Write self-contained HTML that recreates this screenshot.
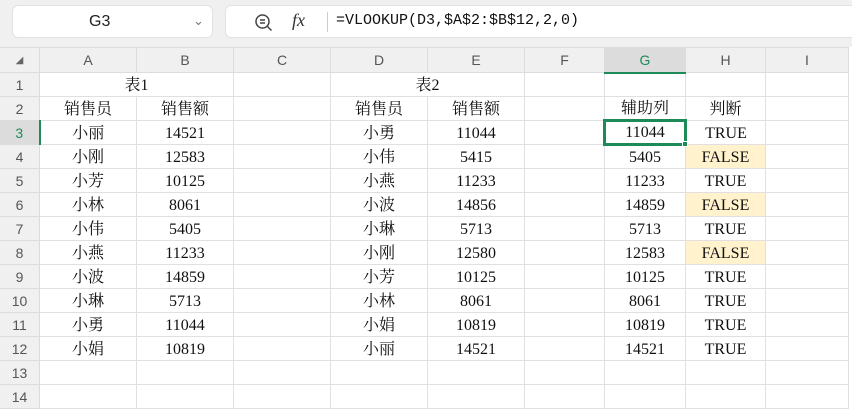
<!DOCTYPE html>
<html><head><meta charset="utf-8"><style>
*{margin:0;padding:0;box-sizing:border-box}
body{width:852px;height:406px;overflow:hidden;background:#fff;position:relative;font-family:"Liberation Serif","Noto Serif CJK SC",serif}
.top{position:absolute;left:0;top:0;width:852px;height:47px;background:#f0f0f0}
.nb{position:absolute;left:12px;top:5px;width:201px;height:33px;background:#fff;border-radius:6px;border:1px solid #e2e2e2;font:16px "Liberation Sans",sans-serif;color:#222;line-height:31px;padding-left:76px}
.fb{position:absolute;left:225px;top:5px;width:640px;height:33px;background:#fff;border-radius:6px;border:1px solid #e2e2e2}
table{position:absolute;left:-1px;top:47px;border-collapse:collapse;table-layout:fixed}
td{border:1px solid #e0e0e0;height:24px;text-align:center;font-size:16px;color:#111;white-space:nowrap;padding:2px 0 0 0;overflow:hidden;line-height:20px}
tr.h td{height:25px;background:#f0f0f0;font:14px "Liberation Sans",sans-serif;color:#555;border-color:#dcdcdc;padding:0}
td.r{background:#f0f0f0;font:14px "Liberation Sans",sans-serif;color:#555;border-color:#dcdcdc;padding:0}
.y{background:#fff2cc}
</style></head><body>
<div class="top"></div>
<div class="nb">G3<span style="position:absolute;left:180px;top:-1px;color:#777;font-size:13px">&#8964;</span></div>
<div class="fb">
<svg style="position:absolute;left:28px;top:7px" width="20" height="20" viewBox="0 0 20 20"><circle cx="8.5" cy="8.5" r="6.5" fill="none" stroke="#444" stroke-width="1.5"/><path d="M6 7h5M6 10h5M13.5 13.5l4 4" stroke="#444" stroke-width="1.5"/></svg>
<span style="position:absolute;left:66px;top:4px;font:italic 18px 'Liberation Serif',serif;color:#333">fx</span>
<div style="position:absolute;left:101px;top:6px;width:1px;height:20px;background:#ccc"></div>
<span style="position:absolute;left:110px;top:6px;font:15px 'Liberation Mono',monospace;color:#111">=VLOOKUP(D3,$A$2:$B$12,2,0)</span>
</div>
<table>
<colgroup><col style="width:40px"><col style="width:97px"><col style="width:97px"><col style="width:97px"><col style="width:97px"><col style="width:97px"><col style="width:80px"><col style="width:81px"><col style="width:80px"><col style="width:83px"></colgroup>
<tr class="h"><td style="font-size:10px;color:#666">&#9698;</td><td>A</td><td>B</td><td>C</td><td>D</td><td>E</td><td>F</td><td style="background:#dcdcdc;color:#1e8a5a;border-bottom:2px solid #1e8a5a">G</td><td>H</td><td>I</td></tr>
<tr><td class="r">1</td><td colspan="2">表1</td><td></td><td colspan="2">表2</td><td></td><td></td><td></td><td></td></tr>
<tr><td class="r">2</td><td>销售员</td><td>销售额</td><td></td><td>销售员</td><td>销售额</td><td></td><td>辅助列</td><td>判断</td><td></td></tr>
<tr><td class="r" style="background:#dcdcdc;color:#1e8a5a;border-right:2px solid #1e8a5a">3</td><td>小丽</td><td>14521</td><td></td><td>小勇</td><td>11044</td><td></td><td style="border:3px solid #1e8a5a;padding-top:0">11044</td><td>TRUE</td><td></td></tr>
<tr><td class="r">4</td><td>小刚</td><td>12583</td><td></td><td>小伟</td><td>5415</td><td></td><td>5405</td><td class="y">FALSE</td><td></td></tr>
<tr><td class="r">5</td><td>小芳</td><td>10125</td><td></td><td>小燕</td><td>11233</td><td></td><td>11233</td><td>TRUE</td><td></td></tr>
<tr><td class="r">6</td><td>小林</td><td>8061</td><td></td><td>小波</td><td>14856</td><td></td><td>14859</td><td class="y">FALSE</td><td></td></tr>
<tr><td class="r">7</td><td>小伟</td><td>5405</td><td></td><td>小琳</td><td>5713</td><td></td><td>5713</td><td>TRUE</td><td></td></tr>
<tr><td class="r">8</td><td>小燕</td><td>11233</td><td></td><td>小刚</td><td>12580</td><td></td><td>12583</td><td class="y">FALSE</td><td></td></tr>
<tr><td class="r">9</td><td>小波</td><td>14859</td><td></td><td>小芳</td><td>10125</td><td></td><td>10125</td><td>TRUE</td><td></td></tr>
<tr><td class="r">10</td><td>小琳</td><td>5713</td><td></td><td>小林</td><td>8061</td><td></td><td>8061</td><td>TRUE</td><td></td></tr>
<tr><td class="r">11</td><td>小勇</td><td>11044</td><td></td><td>小娟</td><td>10819</td><td></td><td>10819</td><td>TRUE</td><td></td></tr>
<tr><td class="r">12</td><td>小娟</td><td>10819</td><td></td><td>小丽</td><td>14521</td><td></td><td>14521</td><td>TRUE</td><td></td></tr>
<tr><td class="r">13</td><td></td><td></td><td></td><td></td><td></td><td></td><td></td><td></td><td></td></tr>
<tr><td class="r">14</td><td></td><td></td><td></td><td></td><td></td><td></td><td></td><td></td><td></td></tr>
</table>
<div style="position:absolute;left:682px;top:141px;width:6px;height:6px;background:#1e8a5a;border:1px solid #fff"></div>
</body></html>
